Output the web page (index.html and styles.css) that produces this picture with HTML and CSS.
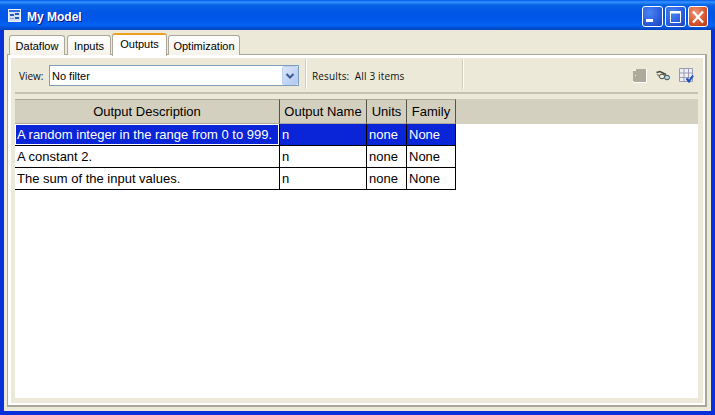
FILE: index.html
```html
<!DOCTYPE html>
<html lang="en">
<head>
<meta charset="utf-8">
<title>My Model</title>
<link rel="stylesheet" href="styles.css">
</head>
<body>
<div class="window">
  <header class="titlebar">
    <svg class="app-icon" width="13" height="13" viewBox="0 0 13 13">
      <rect x="0.5" y="0.5" width="12" height="12" fill="#cfe0f8" stroke="#eef4fe"/>
      <rect x="1" y="1" width="11" height="2" fill="#2f6fe0"/>
      <rect x="2" y="5" width="4" height="2" fill="#2a5bb0"/>
      <rect x="7" y="4" width="4" height="2" fill="#2a5bb0"/>
      <rect x="7" y="8" width="4" height="2" fill="#2a5bb0"/>
      <rect x="2" y="9" width="4" height="1" fill="#7fa3e0"/>
    </svg>
    <span class="title">My Model</span>
    <div class="win-buttons">
      <div class="win-btn"><svg width="21" height="21" viewBox="0 0 21 21"><rect x="4" y="13" width="7" height="3" fill="#fff"/></svg></div>
      <div class="win-btn"><svg width="21" height="21" viewBox="0 0 21 21"><path d="M5.500 5.500h10v11h-10z M5 7h11" fill="none" stroke="#fff"/><rect x="5" y="5" width="11" height="2" fill="#fff"/></svg></div>
      <div class="win-btn close"><svg width="20" height="21" viewBox="0 0 20 21"><path d="M5 5.500l10 11M15 5.500l-10 11" stroke="#fff" stroke-width="2.200" fill="none"/></svg></div>
    </div>
  </header>
  <div class="client">
    <nav class="tabs">
      <div class="tab tab-dataflow">Dataflow</div>
      <div class="tab tab-inputs">Inputs</div>
      <div class="tab active">Outputs</div>
      <div class="tab tab-opt">Optimization</div>
    </nav>
    <div class="pane">
      <div class="pane-inner">
        <div class="toolbar">
          <span class="view-label">View:</span>
          <div class="select">
            <span class="select-value">No filter</span>
            <div class="select-btn"><svg width="16" height="16" viewBox="0 0 16 16"><path d="M4.500 6l3.500 3.500L11.500 6" fill="none" stroke="#3d5a94" stroke-width="2"/></svg></div>
          </div>
          <div class="sep sep-a"></div>
          <span class="results">Results:&nbsp; All 3 items</span>
          <div class="sep sep-b"></div>
          <div class="tools">
            <svg width="14" height="14" viewBox="0 0 14 14"><rect width="14" height="14" fill="#aeaa9c"/><path d="M13.500 0v13.500H0" fill="none" stroke="#fff"/><path d="M0 0h3v2H0zM2 6h1v1H2zM0 12h1v2H0z" fill="#f4f2e8"/></svg>
            <svg width="14" height="14" viewBox="0 0 14 14"><path d="M0.500 3.500L4 2.500l6 3" fill="none" stroke="#4a4a44" stroke-width="1.500"/><path d="M1 5l4 4" stroke="#8a8a80" stroke-width="1.500"/><ellipse cx="6" cy="7.500" rx="2.600" ry="2.300" fill="#e4efe8" stroke="#4a4a44"/><ellipse cx="11" cy="8.500" rx="2.500" ry="2.300" fill="#a9dcee" stroke="#4a4a44"/></svg>
            <svg width="15" height="15" viewBox="0 0 15 15"><path d="M.5.5h13v13H.5z" fill="#eeeef6"/><path d="M.5.5h13v13H.5zM5 .5v13M9.500 .5v13M.5 5h13M.5 9.500h13" fill="none" stroke="#9a9ab0"/><path d="M7.500 10.500l2.500 3 4 -6" fill="none" stroke="#1b4fc0" stroke-width="2"/></svg>
          </div>
        </div>
        <div class="grid-wrap">
          <div class="header-row">
            <div class="th c1">Output Description</div>
            <div class="th c2">Output Name</div>
            <div class="th c3">Units</div>
            <div class="th c4">Family</div>
          </div>
          <div class="row selected">
            <div class="td c1"><span class="focus">A random integer in the range from 0 to 999.</span></div>
            <div class="td c2">n</div>
            <div class="td c3">none</div>
            <div class="td c4">None</div>
          </div>
          <div class="row">
            <div class="td c1">A constant 2.</div>
            <div class="td c2">n</div>
            <div class="td c3">none</div>
            <div class="td c4">None</div>
          </div>
          <div class="row">
            <div class="td c1">The sum of the input values.</div>
            <div class="td c2">n</div>
            <div class="td c3">none</div>
            <div class="td c4">None</div>
          </div>
        </div>
      </div>
    </div>
  </div>
</div>
</body>
</html>
```
FILE: styles.css
```css
* { box-sizing: border-box; }
html, body { margin: 0; padding: 0; }
body { width: 715px; height: 415px; overflow: hidden; font-family: "Liberation Sans", Arial, sans-serif; }
.window { width: 715px; height: 415px; display: flex; flex-direction: column; background: #0831d9; }
.titlebar {
  height: 30px; flex: none; display: flex; align-items: center; padding: 0 7px 0 8px;
  background: linear-gradient(to bottom, #0058ee 0, #3593ff 2px, #0663e6 5px, #0055e5 12px, #0058ea 20px, #0264f3 25px, #0047c8 29px, #0042b8 30px);
}
.app-icon { flex: none; margin-right: 6px; margin-top: 1px; }
.title { color: #fff; font: bold 12px "Liberation Sans", sans-serif; text-shadow: 1px 1px #0f1089; margin-top: 3px; }
.win-buttons { margin-left: auto; display: flex; gap: 2px; margin-top: 3px; }
.win-btn {
  width: 21px; height: 21px; border: 1px solid #fff; border-radius: 3px;
  background: radial-gradient(circle at 35% 30%, #4a86f0 0, #2b5fe0 55%, #1a3fb8 100%);
  display: flex;
}
.win-btn svg { margin: -1px; flex: none; }
.win-btn.close { width: 20px; background: radial-gradient(circle at 35% 30%, #eb9a7c 0, #d9572f 55%, #b8361a 100%); }
.client { flex: 1; margin: 0 4px 4px 4px; background: #ece9d8; padding: 3px 4px 4px 3px; display: flex; flex-direction: column; position: relative; }
.tabs { display: flex; height: 22px; flex: none; padding-left: 2px; position: relative; z-index: 1; align-items: flex-end; }
.tab {
  height: 20px; border: 1px solid #aca899; border-bottom: none; border-radius: 3px 3px 0 0;
  background: linear-gradient(to bottom, #fff, #f4f2e9);
  font: 11px "Liberation Sans", sans-serif; color: #000; display: flex; align-items: center; justify-content: center;
  margin-right: 1px;
}
.tab-dataflow { width: 56px; margin-right: 2px; }
.tab-inputs { width: 44px; }
.tab-opt { width: 72px; margin-right: 0; }
.tab.active {
  width: 55px; height: 23px; background: #fff; border-top: 2px solid #f0a020;
  margin-bottom: -1px; position: relative; padding-bottom: 3px; margin-right: 1px;
}
.pane { flex: 1; border: 1px solid #aca899; border-width: 1px 2px 2px 1px; background: #fff; padding: 3px 2px 2px 3px; display: flex; margin-top: -1px; }
.pane-inner { flex: 1; background: #ece9d8; padding: 4px 5px 5px 4px; display: flex; flex-direction: column; }
.toolbar { height: 32px; flex: none; display: flex; align-items: center; border-bottom: 2px solid #c5c2b2; padding: 0 4px 3px 4px; font-size: 10px; }
.view-label { font: 10px "Open Sans", sans-serif; width: 30px; color: #111; }
.select { width: 250px; height: 21px; border: 1px solid #7f9db9; background: #fff; display: flex; align-items: center; justify-content: space-between; }
.select-value { font: 11px "Liberation Sans", sans-serif; padding-left: 2px; }
.select-btn { width: 16px; height: 19px; background: linear-gradient(135deg, #dbe6fb, #b0c8f0); border: 1px solid #bcd0f4; border-radius: 2px; display: flex; align-items: center; }
.select-btn svg { flex: none; margin-left: -1px; }
.sep { width: 2px; height: 30px; background: #d0cdbc; border-right: 1px solid #fff; flex: none; }
.sep-a { margin-left: 6px; margin-top: -3px; }
.results { font: 10px "Open Sans", sans-serif; letter-spacing: .15px; width: 155px; padding-left: 5px; color: #111; }
.sep-b { margin-top: -3px; }
.tools { margin-left: auto; display: flex; gap: 9px; align-items: center; margin-right: 0; }
.grid-wrap { flex: 1; background: #fff; margin-top: 5px; }
.header-row { height: 25px; background: #d4d0bf; display: flex; }
.row { height: 22px; display: flex; border-bottom: 1px solid #000; width: 441px; background: #fff; }
.th, .td { flex: none; font-size: 13px; display: flex; align-items: center; border-right: 1px solid #000; color: #000; white-space: nowrap; }
.th { justify-content: center; border-right-color: #55524a; background: #d4d0bf; border-top: 1px solid #aca899; border-bottom: 1px solid #aca899; }
.td { padding-left: 2px; }
.c1 { width: 265px; }
.c2 { width: 87px; }
.c3 { width: 40px; }
.c4 { width: 49px; }
.selected { background: #0a24d8; }
.selected .td { color: #fff; }
.focus { display: block; height: 21px; line-height: 21px; width: 264px; margin-left: -2px; padding-left: 2px; outline: 1px solid #fff; outline-offset: -1px; }
```
